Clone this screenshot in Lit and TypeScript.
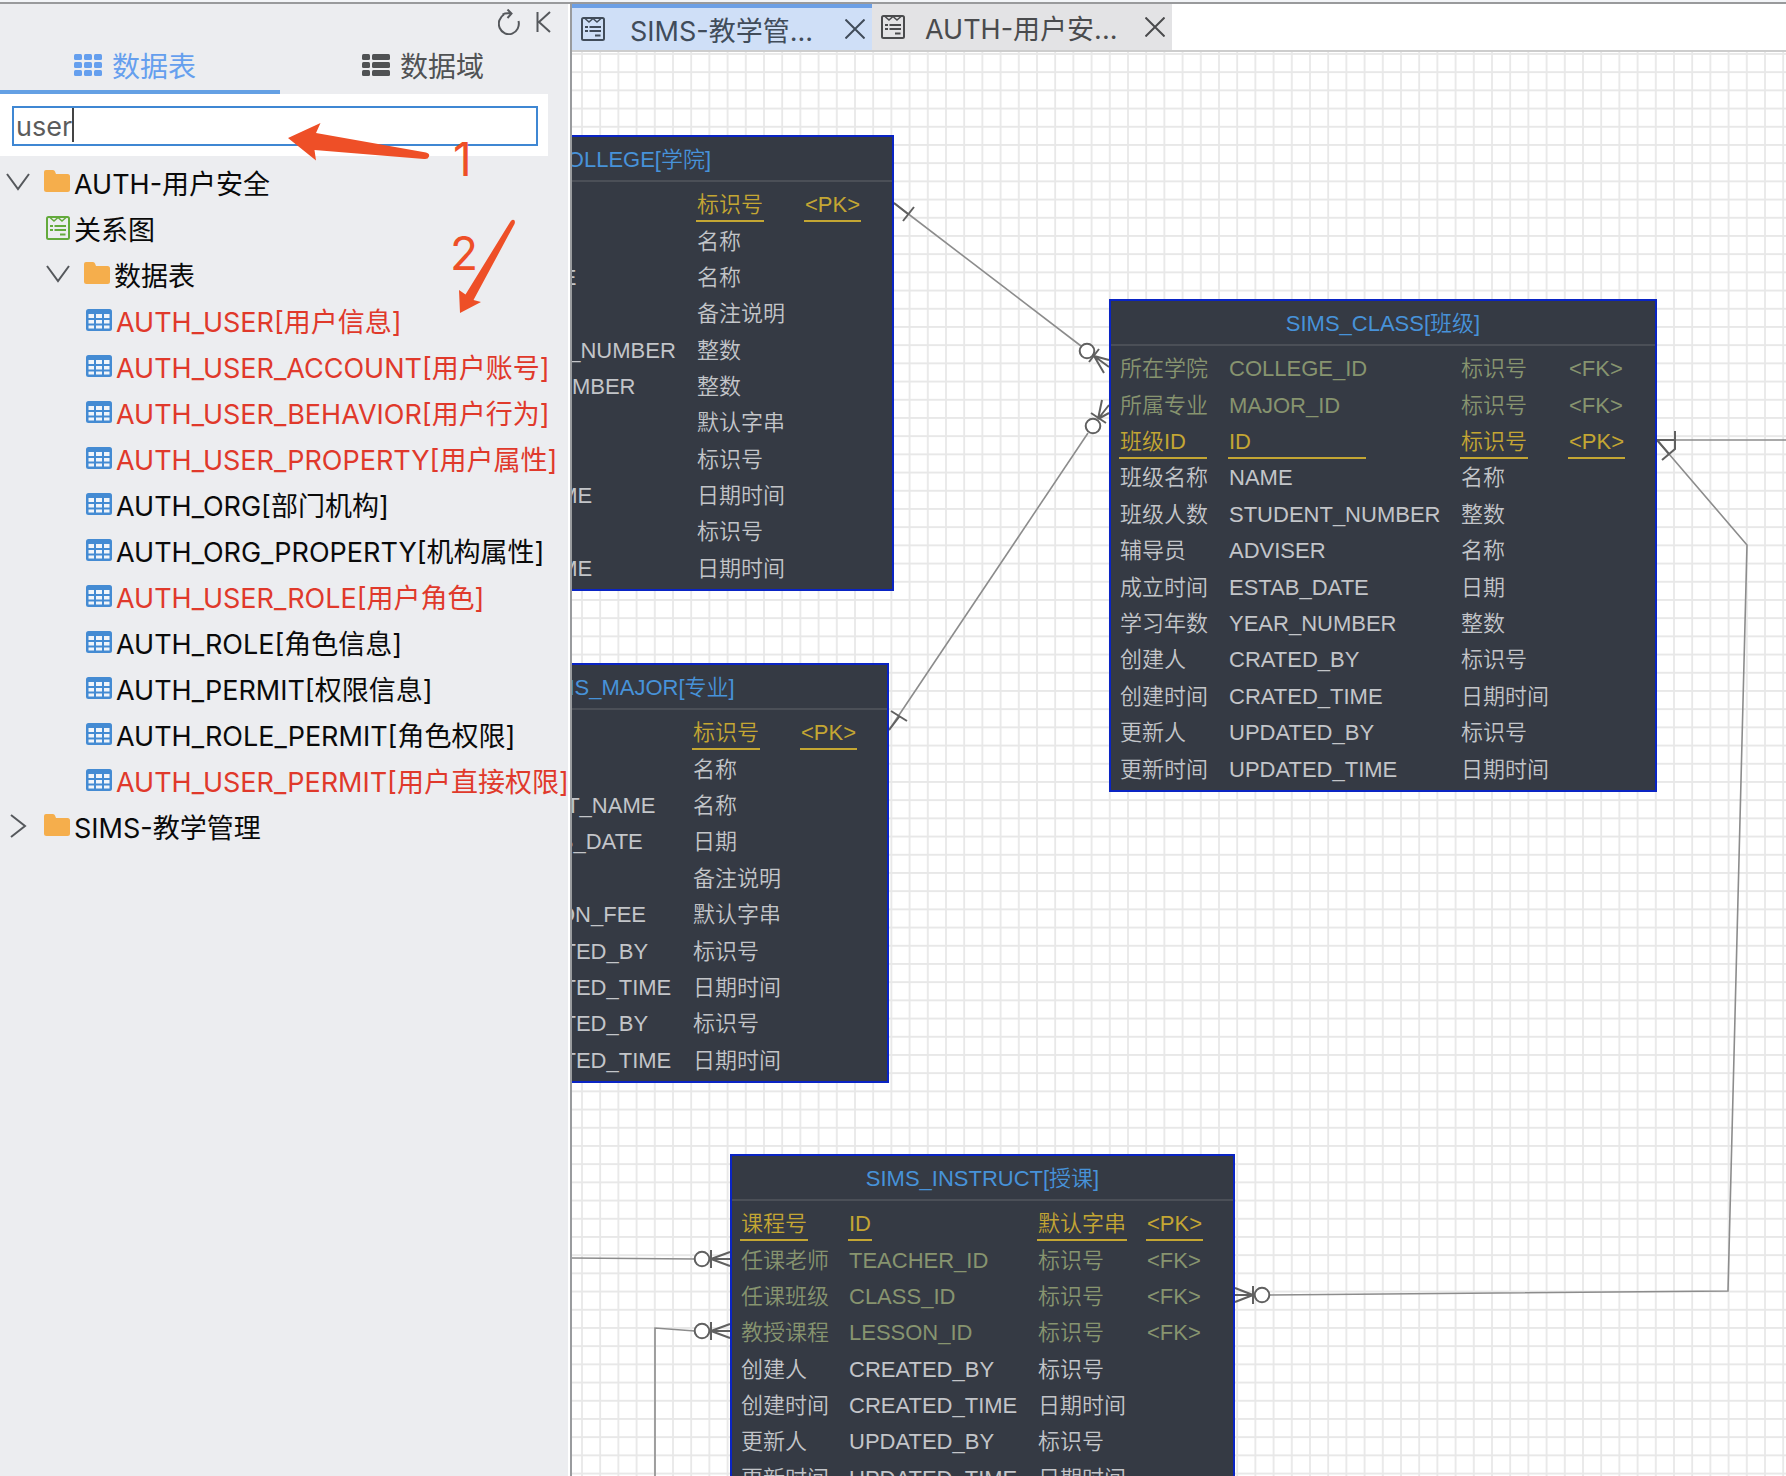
import { LitElement, html, svg, css, nothing } from "lit";
import { customElement, property, state } from "lit/decorators.js";
import { classMap } from "lit/directives/class-map.js";
import { styleMap } from "lit/directives/style-map.js";

type Kind = "pk" | "fk" | "";

/** Label, column name, data type and key kind; `lines` holds the underline widths of a key row. */
interface Field {
  label: string;
  name: string;
  type: string;
  kind?: Kind;
  lines?: number[];
}

interface Entity {
  title: string;
  x: number;
  y: number;
  width: number;
  columns: number[];
  fields: Field[];
}

interface TreeRow {
  text: string;
  icon: "folder" | "diagram" | "table";
  level: number;
  open?: boolean;
}

const f = (label: string, name: string, type: string, kind: Kind = "", lines?: number[]): Field => ({
  label,
  name,
  type,
  kind,
  lines,
});

const ENTITIES: Entity[] = [
  {
    title: "SIMS_COLLEGE[学院]",
    x: -270,
    y: 83,
    width: 592,
    columns: [111, 273, 108],
    fields: [
      f("", "", "标识号", "pk"),
      f("", "", "名称"),
      f("", "SHORT_NAME", "名称"),
      f("", "", "备注说明"),
      f("", "PROFESSION_NUMBER", "整数"),
      f("", "STUDENT_NUMBER", "整数"),
      f("", "", "默认字串"),
      f("", "", "标识号"),
      f("", "CREATED_TIME", "日期时间"),
      f("", "", "标识号"),
      f("", "UPDATED_TIME", "日期时间"),
    ],
  },
  {
    title: "SIMS_MAJOR[专业]",
    x: -191,
    y: 611,
    width: 508,
    columns: [111, 190, 108],
    fields: [
      f("", "", "标识号", "pk"),
      f("", "", "名称"),
      f("", "SHORT_NAME", "名称"),
      f("", "ESTAB_DATE", "日期"),
      f("", "", "备注说明"),
      f("", "TUITION_FEE", "默认字串"),
      f("", "CREATED_BY", "标识号"),
      f("", "CREATED_TIME", "日期时间"),
      f("", "UPDATED_BY", "标识号"),
      f("", "UPDATED_TIME", "日期时间"),
    ],
  },
  {
    title: "SIMS_CLASS[班级]",
    x: 537,
    y: 247,
    width: 548,
    columns: [109, 232, 108],
    fields: [
      f("所在学院", "COLLEGE_ID", "标识号", "fk"),
      f("所属专业", "MAJOR_ID", "标识号", "fk"),
      f("班级ID", "ID", "标识号", "pk", [88, 138]),
      f("班级名称", "NAME", "名称"),
      f("班级人数", "STUDENT_NUMBER", "整数"),
      f("辅导员", "ADVISER", "名称"),
      f("成立时间", "ESTAB_DATE", "日期"),
      f("学习年数", "YEAR_NUMBER", "整数"),
      f("创建人", "CRATED_BY", "标识号"),
      f("创建时间", "CRATED_TIME", "日期时间"),
      f("更新人", "UPDATED_BY", "标识号"),
      f("更新时间", "UPDATED_TIME", "日期时间"),
    ],
  },
  {
    title: "SIMS_INSTRUCT[授课]",
    x: 158,
    y: 1102,
    width: 505,
    columns: [108, 189, 109],
    fields: [
      f("课程号", "ID", "默认字串", "pk"),
      f("任课老师", "TEACHER_ID", "标识号", "fk"),
      f("任课班级", "CLASS_ID", "标识号", "fk"),
      f("教授课程", "LESSON_ID", "标识号", "fk"),
      f("创建人", "CREATED_BY", "标识号"),
      f("创建时间", "CREATED_TIME", "日期时间"),
      f("更新人", "UPDATED_BY", "标识号"),
      f("更新时间", "UPDATED_TIME", "日期时间"),
    ],
  },
];

const TREE: TreeRow[] = [
  { text: "AUTH-用户安全", icon: "folder", level: 1, open: true },
  { text: "关系图", icon: "diagram", level: 2 },
  { text: "数据表", icon: "folder", level: 2, open: true },
  { text: "AUTH_USER[用户信息]", icon: "table", level: 3 },
  { text: "AUTH_USER_ACCOUNT[用户账号]", icon: "table", level: 3 },
  { text: "AUTH_USER_BEHAVIOR[用户行为]", icon: "table", level: 3 },
  { text: "AUTH_USER_PROPERTY[用户属性]", icon: "table", level: 3 },
  { text: "AUTH_ORG[部门机构]", icon: "table", level: 3 },
  { text: "AUTH_ORG_PROPERTY[机构属性]", icon: "table", level: 3 },
  { text: "AUTH_USER_ROLE[用户角色]", icon: "table", level: 3 },
  { text: "AUTH_ROLE[角色信息]", icon: "table", level: 3 },
  { text: "AUTH_PERMIT[权限信息]", icon: "table", level: 3 },
  { text: "AUTH_ROLE_PERMIT[角色权限]", icon: "table", level: 3 },
  { text: "AUTH_USER_PERMIT[用户直接权限]", icon: "table", level: 3 },
  { text: "SIMS-教学管理", icon: "folder", level: 1, open: false },
];

const chevronDown = html`<svg width="24" height="24" viewBox="0 0 24 24" fill="none" stroke="#55585c" stroke-width="2" aria-hidden="true"><path d="M1 4 L12 19 L23 4" /></svg>`;
const chevronRight = html`<svg width="24" height="24" viewBox="0 0 24 24" fill="none" stroke="#55585c" stroke-width="2" aria-hidden="true"><path d="M5 1 L19 12 L5 23" /></svg>`;
const folderIcon = html`<svg width="26" height="26" viewBox="0 0 26 26" fill="#f5ae4c" aria-hidden="true"><path d="M0 3 Q0 1 2 1 H9 Q10.500 1 11 2.500 L12 5 H23.500 Q26 5 26 7.500 V20.500 Q26 23 23.500 23 H2.500 Q0 23 0 20.500 Z" /></svg>`;
const tableIcon = html`<svg width="26" height="22" viewBox="0 0 26 22" aria-hidden="true"><rect width="26" height="22" rx="2.500" fill="#448bd3" /><path d="M2.500 5h5.500v4h-5.500z M10 5h6v4h-6z M18 5h5.500v4h-5.500z M2.500 11h5.500v3.500h-5.500z M10 11h6v3.500h-6z M18 11h5.500v3.500h-5.500z M2.500 16.500h5.500v3h-5.500z M10 16.500h6v3h-6z M18 16.500h5.500v3h-5.500z" fill="#f1f5fa" /></svg>`;
const diagramIcon = html`<svg width="24" height="24" viewBox="0 0 24 24" fill="none" stroke="currentColor" stroke-width="2" aria-hidden="true"><rect x="1" y="1" width="22" height="22" rx="1.500" /><path d="M4 1.500 L8 5 L12 1.500 L16 5 L20 1.500" stroke-width="1.500" /><path d="M4 10h3 M8.500 10H20 M4 14h3 M8.500 14H20 M14 18.500h5.500" /></svg>`;
const closeIcon = html`<svg width="20" height="20" viewBox="0 0 20 20" fill="none" stroke="currentColor" stroke-width="2" aria-hidden="true"><path d="M0.500 0.500 L19.500 19.500 M19.500 0.500 L0.500 19.500" /></svg>`;
const gridIcon = html`<svg width="28" height="22" viewBox="0 0 28 22" fill="currentColor" aria-hidden="true">${[0, 8, 16].map((y) => [0, 10, 20].map((x) => svg`<rect x=${x} y=${y} width="8" height="6" rx="1.500" />`))}</svg>`;
const listIcon = html`<svg width="28" height="22" viewBox="0 0 28 22" fill="currentColor" aria-hidden="true">${[0, 8, 16].map((y) => svg`<rect x="0" y=${y} width="8" height="6" rx="1.500" /><rect x="10" y=${y} width="18" height="6" rx="1.500" />`)}</svg>`;

@customElement("tree-panel")
class TreePanel extends LitElement {
  @state() private query = "user";

  static styles = css`
    :host {
      display: flex;
      flex-direction: column;
      position: relative;
      box-sizing: border-box;
      border-right: 2px solid #fff;
      background: #ecedf0;
      overflow: hidden;
    }
    button {
      border: 0;
      padding: 0;
      margin: 0;
      background: none;
      font: inherit;
      color: inherit;
      white-space: nowrap;
    }
    .tools {
      display: flex;
      justify-content: flex-end;
      align-items: center;
      gap: 16px;
      height: 36px;
      padding-right: 17px;
      color: #55585c;
    }
    .tools button,
    .tab,
    .row {
      display: flex;
      align-items: center;
    }
    .tabs {
      display: grid;
      grid-template-columns: 280fr 288fr;
    }
    .tab {
      justify-content: center;
      gap: 10px;
      height: 54px;
      box-sizing: border-box;
      border-bottom: 4px solid transparent;
      padding-right: 2px;
      color: #505254;
      font-size: 28px;
    }
    .tab.active {
      padding-right: 10px;
      color: #659fee;
      border-bottom-color: #64a0e4;
    }
    .search {
      position: relative;
      background: #fff;
      margin-right: 20px;
      padding: 12px 10px 10px 12px;
    }
    .box {
      display: block;
      box-sizing: border-box;
      width: 100%;
      height: 40px;
      border: 2px solid #3f87d3;
      border-radius: 0;
      outline: none;
      padding: 0 2px;
      background: #fff;
      color: #5c5c5c;
      font: inherit;
    }
    .caret {
      position: absolute;
      left: 72px;
      top: 14px;
      width: 2px;
      height: 34px;
      background: #444;
    }
    .tree {
      list-style: none;
      margin: 0;
      padding: 3px 0;
    }
    .row {
      gap: 4px;
      height: 46px;
      width: 100%;
      color: #0a0a0a;
    }
    .row svg {
      flex: none;
    }
    .twisty {
      display: flex;
      padding-right: 10px;
    }
    .level1 {
      padding-left: 6px;
    }
    .level2 {
      padding-left: 46px;
    }
    .level3 {
      padding-left: 86px;
    }
    .green {
      display: flex;
      color: #63aa3c;
    }
    .match {
      color: #e0392b;
    }
    .notes {
      position: absolute;
      left: 0;
      top: 0;
      pointer-events: none;
    }
    .digit {
      font-size: 46px;
    }
  `;

  private icon(row: TreeRow) {
    if (row.icon === "folder") return folderIcon;
    return row.icon === "table" ? tableIcon : html`<span class="green">${diagramIcon}</span>`;
  }

  render() {
    const q = this.query.toLowerCase();
    return html`
      <div class="tools">
        <button aria-label="刷新">
          <svg width="22" height="26" viewBox="0 0 22 26" fill="none" stroke="currentColor" stroke-width="2" aria-hidden="true"><path d="M6 5.500 A10 10.500 0 1 0 20.500 12" /><path d="M4.500 5.500 Q8 3.500 13 4.500 M9.500 0.500 L13.500 4.500 L9.500 9" /></svg>
        </button>
        <button aria-label="收起">
          <svg width="15" height="22" viewBox="0 0 15 22" fill="none" stroke="currentColor" stroke-width="2" aria-hidden="true"><path d="M1.500 1 V21 M14 1 L3 11 L14 21" /></svg>
        </button>
      </div>
      <div class="tabs" role="tablist">
        <button class="tab active" role="tab" aria-selected="true">${gridIcon}数据表</button>
        <button class="tab" role="tab" aria-selected="false">${listIcon}数据域</button>
      </div>
      <div class="search">
        <input class="box" aria-label="搜索数据表" .value=${this.query} @input=${(e: Event) => (this.query = (e.target as HTMLInputElement).value)} />
        <span class="caret"></span>
      </div>
      <ul class="tree">
        ${TREE.map(
          (row) => html`<li>
            <button
              class=${classMap({ row: true, [`level${row.level}`]: true, match: q !== "" && row.icon === "table" && row.text.toLowerCase().includes(q) })}
              aria-expanded=${row.open === undefined ? nothing : String(row.open)}
            >
              ${row.open === undefined ? nothing : html`<span class="twisty">${row.open ? chevronDown : chevronRight}</span>`}${this.icon(row)}<span>${row.text}</span>
            </button>
          </li>`,
        )}
      </ul>
      <svg class="notes" width="568" height="320" fill="#ee4f27" aria-hidden="true">
        <path d="M288 134 L320.500 119 L316 129 L426 148.500 Q430 149.500 429 152.500 Q428 155.500 424 155 L314.500 146 L316 156.500 Z" />
        <path d="M460 309 L459 286 L465.500 290.500 L510.500 217.500 Q512 215 514 216 Q515.500 217 514.500 220 L473.500 296 L481 298 Z" />
        <text class="digit" x="453" y="172">1</text>
        <text class="digit" x="450" y="266">2</text>
      </svg>
    `;
  }
}

@customElement("entity-card")
class EntityCard extends LitElement {
  @property({ attribute: false }) entity!: Entity;

  static styles = css`
    :host {
      display: block;
      box-sizing: border-box;
      border: 2px solid #0a24c4;
      background: #353a44;
      color: #c3c5c9;
      font: 22px "Liberation Sans", "Noto Sans CJK SC", sans-serif;
      font-weight: 350;
    }
    .title {
      margin: 0;
      height: 43px;
      line-height: 45px;
      border-bottom: 2px solid #4b4f57;
      text-align: center;
      font-size: 22px;
      font-weight: 350;
      color: #4792d9;
    }
    .body {
      padding: 6px 0 1px 8px;
    }
    .fields {
      width: 100%;
      table-layout: fixed;
      border-collapse: collapse;
    }
    .cell {
      padding: 0;
      white-space: nowrap;
      vertical-align: middle;
      text-align: left;
    }
    .value {
      display: block;
      width: fit-content;
      box-sizing: border-box;
      padding: 0 1px;
      line-height: 30px;
      border-bottom: 2px solid transparent;
    }
    .pk {
      color: #c4a633;
    }
    .pk .value {
      border-bottom-color: #c4a633;
    }
    .fk {
      color: #87946f;
    }
  `;

  render() {
    const { title, columns, fields } = this.entity;
    return html`
      <h2 class="title">${title}</h2>
      <div class="body">
        <table class="fields" style=${styleMap({ height: `${Math.round((fields.length * 182) / 5)}px` })}>
          <colgroup>
            ${columns.map((w) => html`<col style=${styleMap({ width: `${w}px` })} />`)}
            <col />
          </colgroup>
          <tbody>
            ${fields.map(
              (row) => html`<tr class=${row.kind ?? ""}>
                ${[row.label, row.name, row.type, row.kind ? `<${row.kind.toUpperCase()}>` : ""].map(
                  (text, i) => html`<td class="cell">
                    ${text ? html`<span class="value" style=${row.lines?.[i] ? styleMap({ width: `${row.lines[i]}px` }) : nothing}>${text}</span>` : nothing}
                  </td>`,
                )}
              </tr>`,
            )}
          </tbody>
        </table>
      </div>
    `;
  }
}

@customElement("er-canvas")
class ErCanvas extends LitElement {
  static styles = css`
    :host {
      display: block;
      position: relative;
      overflow: hidden;
      background: #fff;
    }
    .layer {
      position: absolute;
      inset: 0;
      width: 100%;
      height: 100%;
    }
    .node {
      position: absolute;
    }
  `;

  render() {
    return html`
      <svg class="layer" fill="none" aria-hidden="true">
        <defs>
          <pattern id="grid" x="9" y="1" width="18.200" height="18.200" patternUnits="userSpaceOnUse">
            <path d="M1 0 V18.200 M0 1 H18.200" stroke="#e8e8e8" stroke-width="1.800" />
          </pattern>
        </defs>
        <rect width="100%" height="100%" fill="url(#grid)" />
        <g stroke="#8c8c8c" stroke-width="1.600">
          <path d="M322 151 L509 294" />
          <path d="M317 678 L516 381" />
          <path d="M1085 388 H4000" />
          <path d="M1085 388 L1175 493 L1156 1239 L698 1243" />
          <path d="M0 1206 L123 1207" />
          <path d="M123 1279 L83 1276 V4000" />
        </g>
        <g stroke="#606060" stroke-width="2">
          <path d="M322 151 L336 162 M331 169 L342 155" />
          <path d="M317 678 L327 665 M319 659 L335 669" />
          <path d="M1085 388 H1103 V379 M1103 388 V397 L1090 408 M1085 388 L1097 402" />
          <circle cx="515" cy="299" r="7.300" fill="#fff" />
          <path d="M517 310 L527 297 M522 304 L537 308 M522 304 L537 315 M522 304 L532 321" />
          <circle cx="521" cy="374" r="7.300" fill="#fff" />
          <path d="M519 361 L534 371 M526 367 L530 348 M526 367 L537 353 M526 367 L537 361" />
          <circle cx="130" cy="1207" r="7.300" fill="#fff" />
          <path d="M139 1198 V1216 M139 1207 H158 M139 1207 L158 1200 M139 1207 L158 1214" />
          <circle cx="130" cy="1279" r="7.300" fill="#fff" />
          <path d="M139 1270 V1288 M139 1279 H158 M139 1279 L158 1272 M139 1279 L158 1286" />
          <circle cx="690" cy="1243" r="7.300" fill="#fff" />
          <path d="M681 1234 V1252 M681 1243 H663 M681 1243 L663 1236 M681 1243 L663 1250" />
        </g>
      </svg>
      ${ENTITIES.map((entity) => html`<entity-card class="node" .entity=${entity} style=${styleMap({ left: `${entity.x}px`, top: `${entity.y}px`, width: `${entity.width}px` })}></entity-card>`)}
    `;
  }
}

@customElement("app-root")
class AppRoot extends LitElement {
  static styles = css`
    :host {
      display: flex;
      flex-direction: column;
      box-sizing: border-box;
      height: 100vh;
      overflow: hidden;
      background: #fff;
      font: 27px Inter, "Noto Sans CJK SC", sans-serif;
    }
    .edge {
      flex: none;
      height: 2px;
      border-bottom: 2px solid #999a9c;
      background: #f3f5f8;
    }
    .shell {
      flex: 1;
      min-height: 0;
      display: grid;
      grid-template-columns: 570px minmax(0, 1fr);
    }
    .main {
      display: flex;
      flex-direction: column;
      min-width: 0;
      border-left: 2px solid #999b9e;
    }
    .files {
      display: flex;
      height: 46px;
      border-bottom: 2px solid #cdcdcd;
    }
    .file {
      display: flex;
      align-items: center;
      box-sizing: border-box;
      width: 300px;
      padding: 0 7px 0 9px;
      background: #e3e3e5;
      color: #4a4b4d;
    }
    .file.active {
      border-top: 4px solid #6c9fe5;
      background: #cfdff7;
      color: #414c5a;
    }
    .file svg {
      flex: none;
    }
    .name {
      flex: 1;
      border: 0;
      margin: 0;
      padding: 0 0 0 20px;
      background: none;
      color: inherit;
      font: inherit;
      text-align: left;
      white-space: nowrap;
    }
    .active .name {
      padding-left: 25px;
    }
    .close {
      display: flex;
      border: 0;
      margin: 0;
      padding: 0;
      background: none;
      color: inherit;
    }
    .canvas {
      flex: 1;
      min-height: 0;
    }
  `;

  render() {
    return html`
      <div class="edge"></div>
      <div class="shell">
        <tree-panel></tree-panel>
        <main class="main">
          <div class="files">
            ${["SIMS-教学管...", "AUTH-用户安..."].map(
              (name, i) => html`<div class=${classMap({ file: true, active: i === 0 })}>
                ${diagramIcon}
                <button class="name">${name}</button>
                <button class="close" aria-label="关闭">${closeIcon}</button>
              </div>`,
            )}
          </div>
          <er-canvas class="canvas"></er-canvas>
        </main>
      </div>
    `;
  }
}
